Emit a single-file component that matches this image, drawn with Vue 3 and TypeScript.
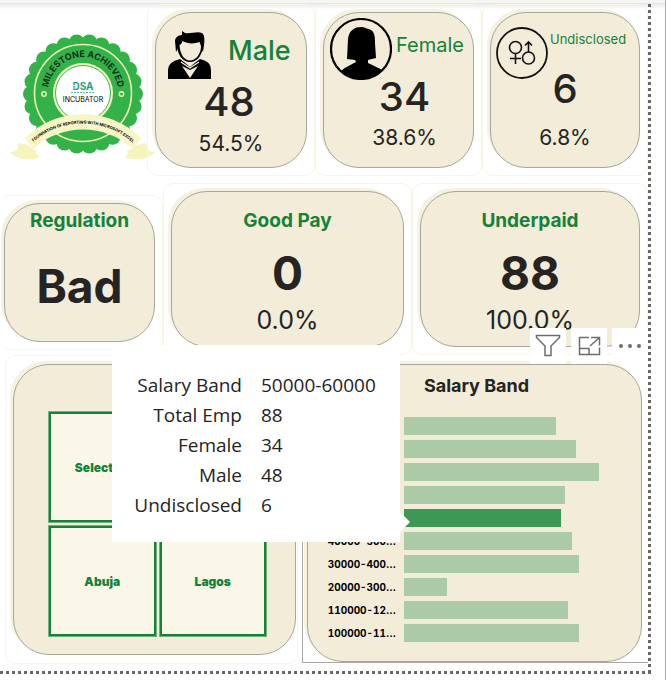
<script setup lang="ts">
interface Band {
  label: string
  total: number
  active?: boolean
}

const bands: Band[] = [
  { label: '', total: 151 },
  { label: '', total: 171 },
  { label: '', total: 194 },
  { label: '', total: 160 },
  { label: '', total: 156, active: true },
  { label: '40000-500…', total: 167 },
  { label: '30000-400…', total: 174 },
  { label: '20000-300…', total: 43 },
  { label: '110000-12…', total: 163 },
  { label: '100000-11…', total: 174 },
]

const largest = Math.max(...bands.map((b) => b.total))

const details: [string, string][] = [
  ['Salary Band', '50000-60000'],
  ['Total Emp', '88'],
  ['Female', '34'],
  ['Male', '48'],
  ['Undisclosed', '6'],
]

const scallops = Array.from({ length: 26 }, (_, i) => {
  const angle = (i * 2 * Math.PI) / 26
  return { x: 83 + 52 * Math.cos(angle), y: 94 + 52 * Math.sin(angle) }
})
</script>

<template>
  <div class="page">
    <main class="report">
      <section class="row people">
        <div class="badge">
          <svg width="156" height="134" viewBox="0 30 156 134" role="img">
            <g fill="#34b24a">
              <circle v-for="(s, i) in scallops" :key="i" :cx="s.x" :cy="s.y" r="8" />
              <circle cx="83" cy="94" r="54" />
            </g>
            <circle cx="83" cy="93" r="48.5" fill="none" stroke="#f3f3b4" stroke-width="1.6" />
            <circle cx="83" cy="93" r="29" fill="#fff" stroke="#f3f3b4" stroke-width="2" />
            <circle cx="83" cy="93" r="27.5" fill="#fff" stroke="#34b24a" stroke-width="1" />
            <g fill="#34b24a" stroke="#f3f3b4" stroke-width="1.4">
              <circle cx="44" cy="94" r="2.2" />
              <circle cx="121.5" cy="94" r="2.2" />
            </g>
            <path id="arc-top" d="M48 92a35 35 0 0 1 70 0" fill="none" />
            <text class="arc-title"><textPath href="#arc-top" startOffset="50%">MILESTONE ACHIEVED</textPath></text>
            <text class="dsa" x="83" y="90">DSA</text>
            <path d="M70 85.500h6M70 88h6" stroke="#fff" stroke-width=".7" />
            <path d="M71 92.500h24" stroke="#5fb79a" stroke-width="1.2" stroke-dasharray="2 1" />
            <text class="incubator" x="83" y="102">INCUBATOR</text>
            <path d="M20 143l8 2 5 4 4 2-1 3 4 3c-5 3-10 2-15 2-6 0-10-2-15-7 4 0 6-2 8-3-1-3 0-4 2-6zM145 143l-8 2-5 4-5 2 1 3-3 3c5 3 10 2 15 2 6 0 10-2 15-7-4 0-6-2-8-3 1-3 0-4-2-6z" fill="#f6f3bd" />
            <path d="M25 138C57 106 109 106 141 138L133 149C105 123 61 123 33 149Z" fill="#f8f5c6" />
            <path id="arc-ribbon" d="M32 143C60 117 106 117 134 144" fill="none" />
            <text class="ribbon"><textPath href="#arc-ribbon" startOffset="50%">FOUNDATION OF REPORTING WITH MICROSOFT EXCEL</textPath></text>
          </svg>
        </div>

        <div class="tile">
          <article class="panel person male">
            <header>
              <svg width="44" height="48" viewBox="0 0 44 48">
                <path d="M0 48v-8c0-6 3-9 9-11l3-1 4 3 6 5 6-5 4-3 3 1c6 2 8 5 8 11v8z" />
                <path d="M9 13c0 10 5 18 13 18s13-8 13-18z" />
                <path d="M8 21L7 10c0-3 3-6 7-6V0l3 2c6 1 12-2 17 0 3 2 3 8 1 19l-4-8H12z" />
                <path d="M11.500 14c1.500-.5 2.500-2 3-4 5 3 12 3 17 1l1.500 4c0 8-5 14.500-11 14.500S12 23 11.500 14z" fill="#f2ecd9" />
                <path d="M13 31l9 6 9-6" fill="none" stroke="#f2ecd9" stroke-width="1.3" />
                <path d="M14 35l8 4 8-4-8 12z" fill="#f2ecd9" />
              </svg>
              <h2>Male</h2>
            </header>
            <p class="value">48</p>
            <p class="share">54.5%</p>
          </article>
        </div>

        <div class="tile">
          <article class="panel person female">
            <header>
              <svg width="62" height="62" viewBox="0 0 62 62">
                <circle cx="31" cy="31" r="30" fill="none" stroke="#000" stroke-width="2.2" />
                <path d="M17 41l1-20C19 12 25 9 31 9c4 0 6 2 8 2 6 2 6 8 6 14l1 15-8 2v3c6 3 11 5 14 7A30 30 0 0 1 11 53c4-4 10-6 15-9l-1-2z" />
              </svg>
              <h2>Female</h2>
            </header>
            <p class="value">34</p>
            <p class="share">38.6%</p>
          </article>
        </div>

        <div class="tile">
          <article class="panel person undisclosed">
            <header>
              <svg width="52" height="52" viewBox="0 0 52 52" fill="none" stroke="#111">
                <circle cx="26" cy="26" r="25" stroke-width="1.8" />
                <g stroke-width="1.6">
                  <circle cx="19.5" cy="20.5" r="6" />
                  <path d="M19.500 26.500v10.500M14 31.500h11" />
                  <circle cx="32.5" cy="31" r="6" />
                  <path d="M32.500 25V15.500M29 18.500l3.500-3.500 3.500 3.500" />
                </g>
              </svg>
              <h2>Undisclosed</h2>
            </header>
            <p class="value">6</p>
            <p class="share">6.8%</p>
          </article>
        </div>
      </section>

      <section class="row pay">
        <div class="tile short">
          <article class="panel metric">
            <h2>Regulation</h2>
            <p class="value word">Bad</p>
          </article>
        </div>
        <div class="tile">
          <article class="panel metric">
            <h2>Good Pay</h2>
            <p class="value">0</p>
            <p class="share">0.0%</p>
          </article>
        </div>
        <div class="tile">
          <article class="panel metric">
            <h2>Underpaid</h2>
            <p class="value">88</p>
            <p class="share">100.0%</p>
          </article>
        </div>
      </section>

      <section class="row breakdown">
        <div class="tile">
          <div class="panel cities">
            <div class="city-row"><button type="button">Select all</button></div>
            <div class="city-row">
              <button type="button">Abuja</button>
              <button type="button">Lagos</button>
            </div>
          </div>
        </div>

        <div class="selected">
          <div class="tools">
            <button type="button" aria-label="Filters">
              <svg width="26" height="24" viewBox="0 0 26 24"><path d="M1.500 1.500h23v2L16 12v9.500h-6V12L1.500 3.500z" /></svg>
            </button>
            <button type="button" aria-label="Focus mode">
              <svg width="24" height="22" viewBox="0 0 24 22"><path d="M12 2.500H2.500v17h20v-7M2.500 13.500h9.500v6M14 2.500h8.500v8M22 3l-9 8" /></svg>
            </button>
            <button type="button" aria-label="More options">
              <svg class="dots" width="24" height="6" viewBox="0 0 24 6"><circle cx="3" cy="3" r="2" /><circle cx="12" cy="3" r="2" /><circle cx="21" cy="3" r="2" /></svg>
            </button>
          </div>
          <div class="panel chart">
            <h2>Salary Band</h2>
            <div v-for="(band, i) in bands" :key="i" class="band">
              <span class="band-label">{{ band.label }}</span>
              <div class="track">
                <div class="bar" :class="{ active: band.active }" :style="{ width: (band.total / largest) * 100 + '%' }"></div>
                <div v-if="band.active" class="tooltip">
                  <table>
                    <tbody>
                      <tr v-for="[name, value] in details" :key="name">
                        <th scope="row">{{ name }}</th>
                        <td>{{ value }}</td>
                      </tr>
                    </tbody>
                  </table>
                </div>
              </div>
            </div>
          </div>
        </div>
      </section>
    </main>
  </div>
</template>

<style>
body {
  background: #fff;
}
</style>

<style scoped>
* {
  box-sizing: border-box;
}
.page {
  padding: 4px 14px 7px 0;
  border-right: 1px solid #b0aead;
  background: linear-gradient(#f5f5f5 0 3px, #e4e4e4 3px, #fff 9px);
  font-family: Inter, 'Open Sans', sans-serif;
  color: #252423;
}
.report {
  padding: 0 3px 10px 0;
  background:
    repeating-linear-gradient(to bottom, #6b6765 0 3px, transparent 3px 6px) right top / 3px 100% no-repeat,
    repeating-linear-gradient(to right, #6b6765 0 3px, transparent 3px 6px) left bottom / 100% 3px no-repeat;
}
h2,
p {
  margin: 0;
}
.row {
  display: grid;
}
.people {
  grid-template-columns: 147fr 168fr 167fr 166fr;
}
.pay {
  grid-template-columns: 163fr 249fr 236fr;
  margin-top: 7px;
}
.breakdown {
  grid-template-columns: 293fr 346fr;
  column-gap: 4px;
  padding-left: 5px;
}
.tile {
  min-width: 0;
  padding: 7px;
  border: 1px solid #f8f5e3;
  border-radius: 10px;
}
.panel {
  border: 1px solid #a9a697;
  border-radius: 36px;
  background: #f2ecd9;
  box-shadow: -3px -3px 0 #f6f2e2;
}
.badge {
  min-width: 0;
  padding-top: 26px;
}
.badge svg {
  display: block;
}
.badge text {
  text-anchor: middle;
  font-weight: 700;
}
.arc-title {
  font-size: 9px;
  fill: #12301a;
}
.dsa {
  font-size: 10px;
  fill: #2f9e77;
}
.badge .incubator {
  font-size: 7px;
  font-weight: 400;
}
.ribbon {
  font-size: 4px;
}

.person {
  display: flex;
  flex-direction: column;
  height: 156px;
  text-align: center;
}
.person header {
  display: flex;
  flex: none;
  align-items: flex-start;
}
.person header svg {
  flex: none;
}
.person h2 {
  color: #158239;
  font-weight: 400;
}
.person .value {
  font-size: 40px;
  font-weight: 500;
  line-height: 34px;
}
.person .share {
  margin-top: auto;
  padding-bottom: 16px;
  font-size: 21px;
  line-height: 26px;
}
.male header {
  height: 72px;
  padding: 18px 0 0 12px;
  gap: 16px;
}
.male h2 {
  margin-top: 4px;
  font-size: 27px;
  font-weight: 500;
  line-height: 32px;
}
.male .value {
  padding-right: 4px;
}
.male .share {
  padding-bottom: 10px;
}
.female header {
  height: 67px;
  padding: 5px 0 0 6px;
  gap: 4px;
}
.female h2 {
  margin-top: 15px;
  font-size: 20px;
  line-height: 24px;
}
.female .value,
.female .share {
  padding-left: 12px;
}
.undisclosed header {
  height: 59px;
  padding: 14px 0 0 5px;
  gap: 2px;
}
.undisclosed h2 {
  margin-top: 3px;
  font-size: 13px;
  line-height: 18px;
}

.metric {
  display: flex;
  flex-direction: column;
  height: 156px;
  padding-top: 16px;
  text-align: center;
}
.metric h2 {
  color: #158239;
  font-size: 19px;
  font-weight: 700;
  line-height: 26px;
}
.metric .value {
  margin-top: 19px;
  font-size: 46px;
  font-weight: 700;
  line-height: 40px;
}
.metric .share {
  margin-top: 11px;
  font-size: 25px;
  line-height: 32px;
}
.short {
  align-self: start;
  margin-top: 12px;
  padding-left: 4px;
  border-left: 0;
}
.short .metric {
  height: 139px;
  padding-top: 4px;
}
.metric .word {
  margin-top: 32px;
}

.breakdown .tile {
  padding: 8px 1px 8px 7px;
}
.cities {
  height: 291px;
  padding: 47px 29px 17px 35px;
}
.city-row {
  display: grid;
  grid-template-columns: 1fr 1fr;
  gap: 4px;
  margin-bottom: 4px;
}
.cities button {
  height: 110px;
  padding: 0;
  border: 2px solid #158239;
  outline: 1px solid #6fb37f;
  background: #faf7e8;
  color: #158239;
  font-family: inherit;
  font-size: 12px;
  font-weight: 900;
}

.selected {
  position: relative;
  align-self: start;
  margin-top: 8px;
  padding: 0 6px 0 4px;
  border: 1px solid #a9a7a4;
  border-right: 0;
}
.tools {
  position: absolute;
  right: 0;
  bottom: 100%;
  display: flex;
  gap: 5px;
}
.tools button {
  display: flex;
  align-items: center;
  justify-content: center;
  width: 36px;
  height: 36px;
  padding: 0;
  border: 0;
  background: #fff;
}
.tools svg {
  fill: none;
  stroke: #6f6d6b;
  stroke-width: 1.5;
}
.tools .dots {
  fill: #6f6d6b;
  stroke: none;
}
.chart {
  height: 298px;
  padding: 8px 42px 0 12px;
}
.chart h2 {
  padding-left: 34px;
  margin-bottom: 18px;
  font-size: 18px;
  font-weight: 700;
  line-height: 26px;
  text-align: center;
}
.band {
  display: grid;
  grid-template-columns: 76px 1fr;
  gap: 8px;
  height: 18px;
  margin-bottom: 5px;
}
.band-label {
  color: #000;
  font-size: 10px;
  font-weight: 700;
  font-variant-numeric: tabular-nums;
  line-height: 18px;
  text-align: right;
}
.track {
  position: relative;
}
.bar {
  height: 18px;
  background: #aacba5;
}
.bar.active {
  background: #3d9854;
}
.tooltip {
  position: absolute;
  right: calc(100% + 4px);
  bottom: -15px;
  width: 288px;
  height: 197px;
  padding: 25px 0 0 18px;
  background: #fff;
}
.tooltip::after {
  content: '';
  position: absolute;
  left: 100%;
  bottom: 10px;
  border: solid transparent;
  border-width: 10px 0 10px 10px;
  border-left-color: #fff;
}
.tooltip table {
  border-collapse: collapse;
  font-family: 'Open Sans', sans-serif;
  font-size: 19px;
  line-height: 30px;
  white-space: nowrap;
}
.tooltip th {
  width: 112px;
  padding: 0;
  font-weight: 400;
  text-align: right;
}
.tooltip td {
  padding: 0 0 0 19px;
}
</style>
